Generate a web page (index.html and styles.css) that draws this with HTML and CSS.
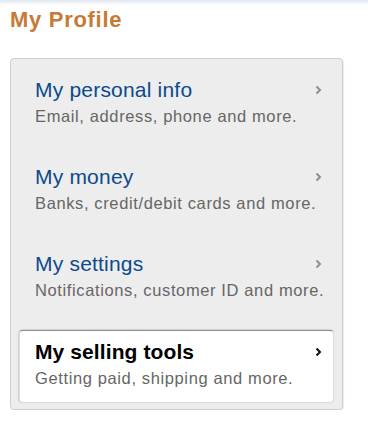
FILE: index.html
```html
<!DOCTYPE html>
<html>
<head>
<meta charset="utf-8">
<link rel="stylesheet" href="styles.css">
</head>
<body>
<div class="topbar"></div>
<h1 class="page-title">My Profile</h1>
<div class="panel">
  <div class="item">
    <div class="text">
      <div class="item-title">My personal info</div>
      <div class="item-sub">Email, address, phone and more.</div>
    </div>
    <svg class="chev" width="7" height="10" viewBox="0 0 7 10"><path d="M1.5 1.5 L5 5 L1.5 8.5" fill="none" stroke="currentColor" stroke-width="2"/></svg>
  </div>
  <div class="item">
    <div class="text">
      <div class="item-title">My money</div>
      <div class="item-sub">Banks, credit/debit cards and more.</div>
    </div>
    <svg class="chev" width="7" height="10" viewBox="0 0 7 10"><path d="M1.5 1.5 L5 5 L1.5 8.5" fill="none" stroke="currentColor" stroke-width="2"/></svg>
  </div>
  <div class="item">
    <div class="text">
      <div class="item-title">My settings</div>
      <div class="item-sub">Notifications, customer ID and more.</div>
    </div>
    <svg class="chev" width="7" height="10" viewBox="0 0 7 10"><path d="M1.5 1.5 L5 5 L1.5 8.5" fill="none" stroke="currentColor" stroke-width="2"/></svg>
  </div>
  <div class="item selected">
    <div class="text">
      <div class="item-title">My selling tools</div>
      <div class="item-sub">Getting paid, shipping and more.</div>
    </div>
    <svg class="chev" width="7" height="10" viewBox="0 0 7 10"><path d="M1.5 1.5 L5 5 L1.5 8.5" fill="none" stroke="currentColor" stroke-width="2"/></svg>
  </div>
</div>
</body>
</html>
```
FILE: styles.css
```css
html, body {
  margin: 0;
  padding: 0;
  background: #ffffff;
  font-family: "Liberation Sans", Arial, Helvetica, sans-serif;
}
.topbar {
  height: 5px;
  background: linear-gradient(#dfe7f1, #ffffff);
}
.page-title {
  margin: 0;
  padding: 2px 0 0 10px;
  height: 53px;
  box-sizing: border-box;
  font-size: 22px;
  line-height: 26px;
  letter-spacing: 0.7px;
  font-weight: bold;
  color: #c77a35;
}
.panel {
  margin-left: 10px;
  width: 333px;
  box-sizing: border-box;
  background: #ededed;
  border: 1px solid #cfcfcf;
  border-radius: 4px;
  padding: 8px 8px 6px 8px;
  display: flex;
  flex-direction: column;
  gap: 12px;
  box-shadow: 1px 1px 1px rgba(0,0,0,0.08);
}
.item {
  display: flex;
  align-items: flex-start;
  justify-content: space-between;
  border: 1px solid transparent;
  border-radius: 4px;
  padding: 9px 11px 12px 15px;
}
.text {
  flex: 1;
  min-width: 0;
  white-space: nowrap;
}
.item-title {
  font-size: 21px;
  line-height: 26px;
  letter-spacing: 0.2px;
  color: #0b4a8b;
}
.item-sub {
  font-size: 16.5px;
  line-height: 26px;
  letter-spacing: 0.62px;
  color: #666666;
}
.chev {
  flex: none;
  margin-top: 8px;
  color: #8f8f8f;
}
.selected {
  margin-top: 2px;
  padding-top: 8px;
  padding-bottom: 11px;
  background: #ffffff;
  border-color: #dcdcdc;
  border-top-color: #8f8f8f;
  box-shadow: -1px 0 1px rgba(0,0,0,0.12), 0 -1px 1px rgba(0,0,0,0.1);
}
.selected .item-title {
  color: #000000;
  font-weight: bold;
  letter-spacing: 0.1px;
}
.selected .chev {
  color: #111111;
}
```
